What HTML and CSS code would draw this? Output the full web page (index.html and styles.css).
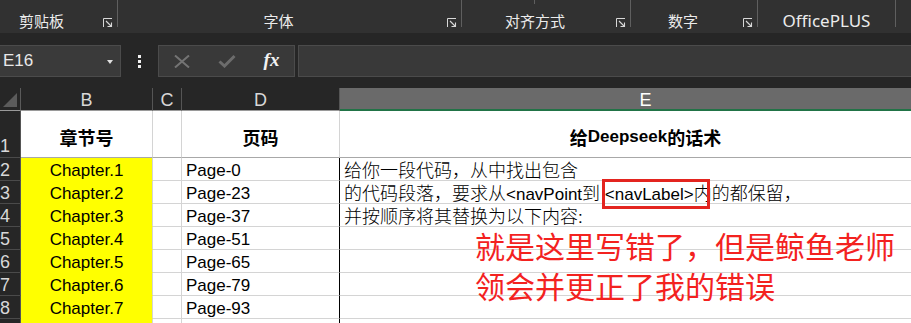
FILE: index.html
```html
<!DOCTYPE html>
<html lang="zh-CN">
<head>
<meta charset="utf-8">
<title>Excel</title>
<link rel="stylesheet" href="styles.css">
</head>
<body>
<div class="app">
  <div class="ribbon">
    <div class="grp g1"><span class="lbl">剪贴板</span><span class="launch"><svg width="10" height="10" viewBox="0 0 10 10"><path d="M0.5 9V0.5H9" fill="none" stroke="#d8d8d8" stroke-width="1"/><path d="M3 3L8.5 8.5M8.5 4.5V8.5H4.5" fill="none" stroke="#d8d8d8" stroke-width="1.1"/></svg></span></div>
    <div class="grp g2"><span class="lbl">字体</span><span class="launch"><svg width="10" height="10" viewBox="0 0 10 10"><path d="M0.5 9V0.5H9" fill="none" stroke="#d8d8d8" stroke-width="1"/><path d="M3 3L8.5 8.5M8.5 4.5V8.5H4.5" fill="none" stroke="#d8d8d8" stroke-width="1.1"/></svg></span></div>
    <div class="grp g3"><span class="lbl">对齐方式</span><span class="launch"><svg width="10" height="10" viewBox="0 0 10 10"><path d="M0.5 9V0.5H9" fill="none" stroke="#d8d8d8" stroke-width="1"/><path d="M3 3L8.5 8.5M8.5 4.5V8.5H4.5" fill="none" stroke="#d8d8d8" stroke-width="1.1"/></svg></span></div>
    <div class="grp g4"><span class="lbl">数字</span><span class="launch"><svg width="10" height="10" viewBox="0 0 10 10"><path d="M0.5 9V0.5H9" fill="none" stroke="#d8d8d8" stroke-width="1"/><path d="M3 3L8.5 8.5M8.5 4.5V8.5H4.5" fill="none" stroke="#d8d8d8" stroke-width="1.1"/></svg></span></div>
    <div class="grp g5"><span class="lbl lat">OfficePLUS</span></div>
  </div>

  <div class="fbar">
    <div class="namebox"><span class="ref">E16</span><span class="caret"></span></div>
    <div class="dots"><i></i><i></i><i></i></div>
    <div class="fbtns">
      <span class="fb"><svg width="16" height="13" viewBox="0 0 16 13"><path d="M1 0.5L15 12.5M15 0.5L1 12.5" stroke="#747474" stroke-width="2" fill="none"/></svg></span>
      <span class="fb"><svg width="18" height="14" viewBox="0 0 18 14"><path d="M1.5 7.5L6.5 12L16.5 2" stroke="#6c6c6c" stroke-width="3" fill="none"/></svg></span>
      <span class="fb fx">fx</span>
    </div>
    <div class="finput"></div>
  </div>

  <div class="sheet">
    <div class="grid">
      <div class="corner"><span class="tri"></span></div>
      <div class="ch">B</div>
      <div class="ch">C</div>
      <div class="ch">D</div>
      <div class="ch sel">E</div>

      <div class="rh r1">1</div>
      <div class="c h1">章节号</div>
      <div class="c h1"></div>
      <div class="c h1">页码</div>
      <div class="c h1 e">给<span class="lat">Deepseek</span>的话术</div>

      <div class="rh">2</div>
      <div class="c y">Chapter.1</div>
      <div class="c"></div>
      <div class="c d">Page-0</div>
      <div class="c l">给你一段代码，从中找出包含</div>

      <div class="rh">3</div>
      <div class="c y">Chapter.2</div>
      <div class="c"></div>
      <div class="c d">Page-23</div>
      <div class="c l">的代码段落，要求从<span class="lat">&lt;navPoint</span>到<span class="lat"> &lt;navLabel&gt;</span>内的都保留，</div>

      <div class="rh">4</div>
      <div class="c y">Chapter.3</div>
      <div class="c"></div>
      <div class="c d">Page-37</div>
      <div class="c l">并按顺序将其替换为以下内容<span class="lat">:</span></div>

      <div class="rh">5</div>
      <div class="c y">Chapter.4</div>
      <div class="c"></div>
      <div class="c d">Page-51</div>
      <div class="c l"></div>

      <div class="rh">6</div>
      <div class="c y">Chapter.5</div>
      <div class="c"></div>
      <div class="c d">Page-65</div>
      <div class="c l"></div>

      <div class="rh">7</div>
      <div class="c y">Chapter.6</div>
      <div class="c"></div>
      <div class="c d">Page-79</div>
      <div class="c l"></div>

      <div class="rh">8</div>
      <div class="c y">Chapter.7</div>
      <div class="c"></div>
      <div class="c d">Page-93</div>
      <div class="c l"></div>

      <div class="rh">9</div>
      <div class="c y"></div>
      <div class="c"></div>
      <div class="c d"></div>
      <div class="c l"></div>
    </div>
    <div class="redbox"></div>
    <div class="note">就是这里写错了，但是鲸鱼老师<br>领会并更正了我的错误</div>
  </div>
</div>
</body>
</html>
```

FILE: styles.css
```css
* { box-sizing: border-box; }
html, body { margin: 0; padding: 0; }
body {
  width: 911px;
  height: 323px;
  overflow: hidden;
  background: #262626;
  font-family: "Noto Sans CJK SC", "Noto Sans", sans-serif;
}
.app { width: 911px; height: 323px; overflow: hidden; }

/* ribbon */
.ribbon {
  height: 33px;
  background: #313131;
  display: flex;
  align-items: flex-start;
}
.grp {
  height: 27px;
  display: flex;
  border-right: 1px solid #5f5f5f;
  flex: none;
  position: relative;
}
.g1 { width: 130px; margin-left: -12px; }
.g2 { width: 344px; }
.g3 { width: 169px; }
.g4 { width: 127px; }
.g5 { width: 138px; }
.g3::before {
  content: "";
  position: absolute;
  left: 72px;
  top: 0;
  width: 1px;
  height: 4px;
  background: #5f5f5f;
}
.lbl {
  flex: 1;
  text-align: center;
  color: #ececec;
  font-size: 15px;
  line-height: 17px;
  padding-top: 12px;
  white-space: nowrap;
}
.lbl.lat {
  font-family: "Noto Sans", sans-serif;
}
.launch {
  flex: none;
  width: 22px;
  padding: 18px 4px 0 8px;
}
.launch svg { display: block; }

/* formula bar */
.fbar {
  margin-top: 12px;
  height: 32px;
  display: flex;
}
.namebox {
  width: 122px;
  margin-left: -1px;
  background: #3a3a3a;
  border: 1px solid #4b4b4b;
  display: flex;
  align-items: center;
  padding-left: 3px;
  flex: none;
}
.ref {
  color: #e8e8e8;
  font-family: "Liberation Sans", sans-serif;
  font-size: 17px;
  flex: 1;
}
.caret {
  width: 0;
  height: 0;
  border-left: 3.5px solid transparent;
  border-right: 3.5px solid transparent;
  border-top: 4px solid #e0e0e0;
  margin-right: 7px;
  margin-top: 1px;
}
.dots {
  width: 37px;
  flex: none;
  display: flex;
  flex-direction: column;
  align-items: center;
  justify-content: center;
  gap: 2px;
}
.dots i {
  display: block;
  width: 3px;
  height: 3px;
  background: #f0f0f0;
}
.fbtns {
  width: 137px;
  flex: none;
  background: #393939;
  border: 1px solid #4b4b4b;
  display: grid;
  grid-template-columns: 45px 45px 45px;
  align-items: center;
  justify-items: center;
}
.fb svg { display: block; }
.fx {
  font-family: "Liberation Serif", serif;
  font-style: italic;
  font-weight: bold;
  font-size: 19px;
  color: #f2f2f2;
  line-height: 20px;
  margin-top: -2px;
}
.finput {
  flex: 1;
  margin-left: 3px;
  margin-right: -2px;
  background: #393939;
  border: 1px solid #4b4b4b;
}

/* sheet */
.sheet {
  margin-top: 11px;
  position: relative;
}
.grid {
  display: grid;
  grid-template-columns: 21px 132px 29px 158px 612px;
  grid-template-rows: 23px 47px repeat(8, 23px);
  width: 952px;
}
.corner {
  background: #262626;
  border-right: 1px solid #5a5a5a;
  border-bottom: 1px solid #9a9a9a;
  position: relative;
}
.tri {
  position: absolute;
  left: 3px;
  top: 5px;
  width: 0;
  height: 0;
  border-left: 14px solid transparent;
  border-bottom: 14px solid #5b5b5b;
}
.ch {
  background: #262626;
  color: #d8d8d8;
  border-right: 1px solid #555;
  border-bottom: 1px solid #9a9a9a;
  font-family: "Liberation Sans", sans-serif;
  font-size: 18px;
  line-height: 19px;
  padding-top: 3px;
  text-align: center;
}
.ch.sel {
  background: #6a6a6a;
  color: #ffffff;
  border-bottom: 2px solid #217346;
}
.rh {
  background: #262626;
  color: #d8d8d8;
  border-right: 1px solid #555;
  border-bottom: 1px solid #4a4a4a;
  font-family: "Liberation Sans", sans-serif;
  font-size: 18px;
  line-height: 19px;
  padding-top: 3px;
  padding-left: 0;
}
.rh.r1 {
  display: flex;
  align-items: flex-end;
  padding-bottom: 1px;
}
.c {
  background: #ffffff;
  border-right: 1px solid #d4d4d4;
  border-bottom: 1px solid #d4d4d4;
  font-size: 18px;
  line-height: 22px;
  color: #000;
  white-space: nowrap;
  font-weight: 300;
}
.lat {
  font-family: "Liberation Sans", sans-serif;
  font-size: 17px;
}
.c.h1 {
  font-weight: bold;
  text-align: center;
  border-bottom-color: #a8a8a8;
  display: flex;
  align-items: center;
  justify-content: center;
  padding-top: 6px;
}
.c.y {
  background: #ffff00;
  text-align: center;
  border-bottom-color: #ffff00;
  font-family: "Liberation Sans", sans-serif;
  font-size: 17px;
  font-weight: normal;
  line-height: 19px;
  padding-top: 3px;
}
.c.d {
  padding-left: 4px;
  border-right-color: #000;
  font-family: "Liberation Sans", sans-serif;
  font-size: 17px;
  font-weight: normal;
  line-height: 19px;
  padding-top: 3px;
}
.c.l {
  padding-left: 4px;
  border-right: none;
}
.redbox {
  position: absolute;
  left: 602px;
  top: 91px;
  width: 108px;
  height: 30px;
  border: 3px solid #e3241f;
}
.note {
  position: absolute;
  left: 475px;
  top: 137px;
  font-size: 30px;
  line-height: 40px;
  color: #f3221f;
  white-space: nowrap;
}
```
